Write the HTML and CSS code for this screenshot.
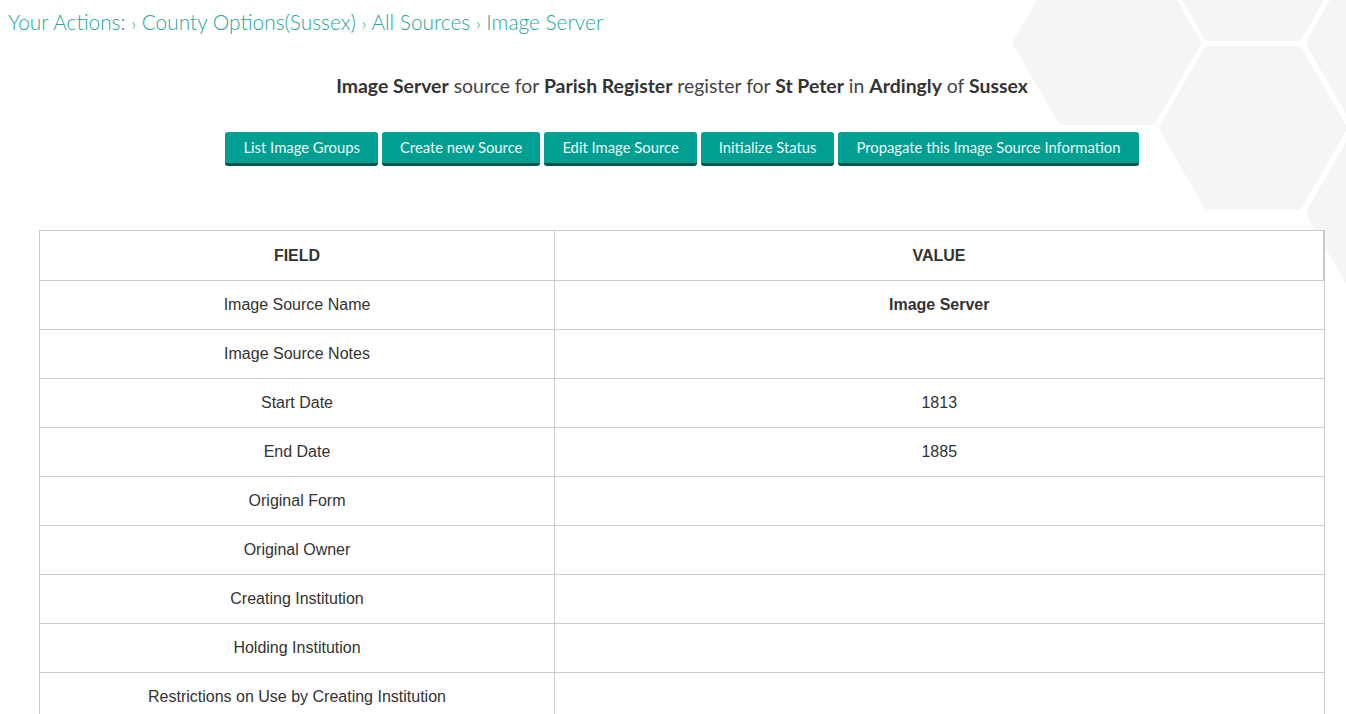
FILE: index.html
```html
<!DOCTYPE html>
<html lang="en">
<head>
    <meta charset="UTF-8">
    <meta name="viewport" content="width=device-width, initial-scale=1.0">
    <title>Image Server</title>
    <link rel="stylesheet" href="styles.css">
</head>
<body>
    <svg class="hex-bg" viewBox="1000 0 346 320" aria-hidden="true">
        <g fill="#f5f5f5" stroke="#f5f5f5" stroke-width="12" stroke-linejoin="round">
            <polygon points="1019,43 1063,-33 1151,-33 1195,43 1151,119 1063,119"/>
            <polygon points="1165,128 1209,52 1297,52 1341,128 1297,204 1209,204"/>
            <polygon points="1165,-41 1209,-117 1297,-117 1341,-41 1297,35 1209,35"/>
            <polygon points="1312,43 1356,-33 1444,-33 1488,43 1444,119 1356,119"/>
            <polygon points="1312,213 1356,137 1444,137 1488,213 1444,289 1356,289"/>
        </g>
    </svg>

    <div class="breadcrumb">
        <a href="#">Your Actions:</a> <span class="sep">›</span>
        <a href="#">County Options(Sussex)</a> <span class="sep">›</span>
        <a href="#">All Sources</a> <span class="sep">›</span>
        <a href="#">Image Server</a>
    </div>

    <div class="container">
        <h2 class="title">
            <b>Image Server</b> source for <b>Parish Register</b> register for <b>St Peter</b> in <b>Ardingly</b> of <b>Sussex</b>
        </h2>

        <div class="actions">
            <a class="btn" href="#">List Image Groups</a>
            <a class="btn" href="#">Create new Source</a>
            <a class="btn" href="#">Edit Image Source</a>
            <a class="btn" href="#">Initialize Status</a>
            <a class="btn" href="#">Propagate this Image Source Information</a>
        </div>

        <table class="details">
            <thead>
                <tr>
                    <th class="field">FIELD</th>
                    <th>VALUE</th>
                </tr>
            </thead>
            <tbody>
                <tr><td>Image Source Name</td><td><b>Image Server</b></td></tr>
                <tr><td>Image Source Notes</td><td></td></tr>
                <tr><td>Start Date</td><td>1813</td></tr>
                <tr><td>End Date</td><td>1885</td></tr>
                <tr><td>Original Form</td><td></td></tr>
                <tr><td>Original Owner</td><td></td></tr>
                <tr><td>Creating Institution</td><td></td></tr>
                <tr><td>Holding Institution</td><td></td></tr>
                <tr><td>Restrictions on Use by Creating Institution</td><td></td></tr>
                <tr><td>Restrictions on Use by Holding Institution</td><td></td></tr>
                <tr><td>Open Data</td><td></td></tr>
                <tr><td>Source URL</td><td></td></tr>
            </tbody>
        </table>
    </div>
</body>
</html>
```

FILE: styles.css
```css
body {
    margin: 0;
    background-color: #ffffff;
    color: #333333;
    font-family: Lato, "Open Sans", sans-serif;
    position: relative;
}
.hex-bg {
    position: absolute;
    top: 0;
    right: 0;
    width: 346px;
    height: 320px;
    z-index: 0;
}
.breadcrumb {
    position: relative;
    padding: 8px 8px 0 8px;
    font-size: 20.85px;
    font-weight: 300;
    line-height: 28px;
    color: #26a69a;
}
.breadcrumb a {
    color: #26a69a;
    text-decoration: none;
}
.breadcrumb .sep {
    font-size: 18px;
}
.container {
    position: relative;
    margin-left: 39px;
    width: 1286px;
}
.title {
    margin: 36px 0 0 0;
    text-align: center;
    font-size: 19.4px;
    font-weight: 400;
    line-height: 26px;
    color: #444444;
}
.title b {
    font-weight: 700;
    color: #333333;
}
.actions {
    margin-top: 33px;
    text-align: center;
    font-size: 0;
}
.btn {
    display: inline-block;
    margin: 0 2px;
    padding: 0 18px;
    height: 31px;
    line-height: 30px;
    font-size: 14.8px;
    color: #eef8f6;
    background-color: #009f92;
    border-bottom: 3px solid #00554d;
    border-radius: 3px;
    text-decoration: none;
}
.details {
    margin-top: 64px;
    width: 100%;
    border-collapse: collapse;
    background-color: #ffffff;
    font-family: "Liberation Sans", Arial, sans-serif;
    font-size: 16px;
    color: #333333;
}
.details th, .details td {
    border: 1px solid #cccccc;
    height: 49px;
    padding: 0 8px;
    text-align: center;
    box-sizing: border-box;
}
.details th {
    height: 50px;
    font-weight: bold;
}
.details th.field {
    width: 515px;
}
.details thead th:last-child {
    border-right: 2px solid #c8c8c8;
}
```
